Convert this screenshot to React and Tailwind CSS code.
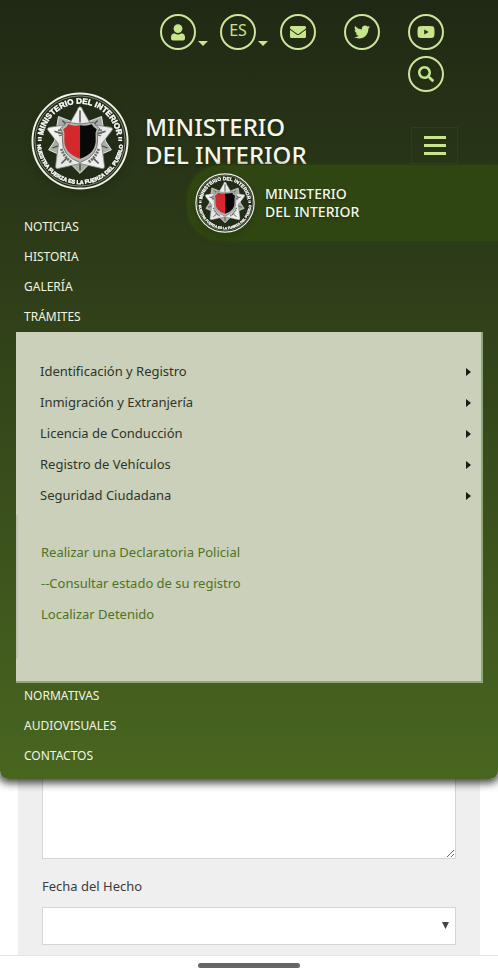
import React, { useId, useState } from 'react';
import { FaEnvelope, FaTwitter, FaYoutube, FaSearch } from 'react-icons/fa';

const mainLinks = ['NOTICIAS', 'HISTORIA', 'GALERÍA'];
const bottomLinks = ['NORMATIVAS', 'AUDIOVISUALES', 'CONTACTOS'];

const services = [
  'Identificación y Registro',
  'Inmigración y Extranjería',
  'Licencia de Conducción',
  'Registro de Vehículos',
  'Seguridad Ciudadana',
];

const procedures = [
  'Realizar una Declaratoria Policial',
  '--Consultar estado de su registro',
  'Localizar Detenido',
];

const circle =
  'flex size-9 items-center justify-center rounded-full border-2 border-[#cbe59a] text-[#c6e58d]';

const Caret = () => (
  <svg viewBox="0 0 10 5" className="mb-1 ml-0.5 h-[5px] w-2.5 fill-[#c6e58d]" aria-hidden="true">
    <path d="M0 0h10L5 5z" />
  </svg>
);

const UserIcon = () => (
  <svg viewBox="0 0 14 17" className="h-[17px] w-3.5 fill-current" aria-hidden="true">
    <circle cx="7" cy="4.600" r="4.400" />
    <path d="M3.500 9.200q3.500 2.400 7 0Q14 10 14 13v1.500q0 2-2 2H2q-2 0-2-2V13q0-3 3.500-3.800z" />
  </svg>
);

const Seal = ({ className }) => {
  const id = useId();
  return (
    <svg viewBox="0 0 100 100" className={className} aria-hidden="true">
      <defs>
        <path id={`${id}top`} d="M12 50a38 38 0 0 1 76 0" />
        <path id={`${id}bottom`} d="M6 50a44 44 0 0 0 88 0" />
        <linearGradient id={`${id}metal`} x1="0" y1="0" x2="1" y2="1">
          <stop offset="0" stopColor="#ffffff" />
          <stop offset="0.5" stopColor="#e4e4e4" />
          <stop offset="1" stopColor="#f5f5f5" />
        </linearGradient>
      </defs>
      <circle cx="50" cy="50" r="48.5" fill="#222d17" stroke="#f1f3e9" strokeWidth="2" />
      <circle cx="50" cy="50" r="46" fill="none" stroke="#dfe4d2" strokeWidth="0.5" />
      <g fill="#fff" stroke="#fff" strokeWidth="0.4" fontFamily="Liberation Sans, sans-serif" fontWeight="bold" textAnchor="middle">
        <text fontSize="8.2">
          <textPath href={`#${id}top`} startOffset="50%">MINISTERIO DEL INTERIOR</textPath>
        </text>
        <text fontSize="5.6">
          <textPath href={`#${id}bottom`} startOffset="50%">NUESTRA FUERZA ES LA FUERZA DEL PUEBLO</textPath>
        </text>
      </g>
      <path d="M7 46h4v1.500H7zM7 48.500h4V50H7zM89 46h4v1.500h-4zM89 48.500h4V50h-4z" fill="#fff" />
      {/* rear star, pointing down */}
      <path
        d="M50 83L40 73l-14 2 1-12-9-4 6-9 4-25 13 5h18l13-5 4 25 6 9-9 4 1 12-14-2z"
        fill="#a9ada5"
        stroke="#e4e7df"
        strokeWidth="1"
      />
      <path d="M32 29l7 7M68 29l-7 7M22 57l9-3M78 57l-9-3M50 80v-8" stroke="#4e534a" strokeWidth="1.500" />
      {/* front star */}
      <path
        d="M50 15q2 0 3 4l8 14 20 3q4 1 1 4L72 53l3 23q0 3-3 2L50 73 28 78q-3 1-3-2l3-23L18 40q-3-3 1-4l20-3 8-14q1-4 3-4z"
        fill={`url(#${id}metal)`}
        stroke="#777b72"
        strokeWidth="0.8"
      />
      <path d="M50 19v12M24 40l9 3M76 40l-9 3M31 73l6-6M69 73l-6-6" stroke="#555a50" strokeWidth="1.600" />
      <path
        d="M29 38l1 7M71 38l-1 7M31 58q3 9 11 14M69 58q-3 9-11 14"
        fill="none"
        stroke="#6a6f66"
        strokeWidth="3"
        strokeDasharray="2 1"
      />
      <path
        d="M36 31q14 3 28 0 3 5 6 6-3 5-2 11 1 17-18 24-19-7-18-24 1-6-2-11 3-1 6-6z"
        fill="#b3b6b1"
        stroke="#60635d"
        strokeWidth="0.8"
      />
      <path d="M50 34q-7 1-12-1-2 4-5 5 2 4 1 9-1 16 16 21z" fill="#d3282c" />
      <path d="M50 34q7 1 12-1 2 4 5 5-2 4-1 9 1 16-16 21z" fill="#090909" />
    </svg>
  );
};

const Brand = ({ small }) => (
  <a href="#inicio" className={`flex items-center ${small ? 'gap-2.5' : 'gap-4'}`}>
    <Seal className={small ? 'size-[60px] drop-shadow-md' : 'size-[98px] drop-shadow-lg'} />
    <span
      className={`text-[#f5f7ec] text-shadow-md font-medium ${
        small ? 'text-sm leading-[18px]' : 'text-2xl leading-7'
      }`}
    >
      <span className="block">MINISTERIO</span>
      <span className="block">DEL INTERIOR</span>
    </span>
  </a>
);

const NavLink = ({ children }) => (
  <li>
    <a href="#seccion" className="block px-6 text-xs leading-[30px] text-[#f0f5e0]">{children}</a>
  </li>
);

const TopBar = () => (
  <div className="flex flex-col items-end gap-1.5 pr-[54px]">
    <div className="flex">
      <button type="button" aria-label="Usuario" className="flex w-[60px] items-end">
        <span className={circle}><UserIcon /></span>
        <Caret />
      </button>
      <button type="button" aria-label="Idioma: ES" className="flex w-[60px] items-end">
        <span className={`${circle} pb-1 text-base`}>ES</span>
        <Caret />
      </button>
      <a href="#correo" aria-label="Correo" className="w-16">
        <span className={circle}><FaEnvelope size={16} /></span>
      </a>
      <a href="#twitter" aria-label="Twitter" className="w-16">
        <span className={circle}><FaTwitter size={16} /></span>
      </a>
      <a href="#youtube" aria-label="YouTube" className={circle}><FaYoutube size={18} /></a>
    </div>
    <button type="button" aria-label="Buscar" className={circle}><FaSearch size={16} /></button>
  </div>
);

const App = () => {
  const [menuOpen, setMenuOpen] = useState(true);
  const [details, setDetails] = useState('');

  return (
    <div className="flex min-h-screen flex-col bg-white font-['Noto_Sans','Open_Sans',sans-serif]">
      <header className="relative z-10 rounded-b-lg bg-linear-to-b from-[#202914] via-[#34461a] to-[#496620] pt-3.5 pb-2 shadow-[0_2px_9px_2px_rgba(0,0,0,0.75)]">
        <TopBar />

        <div className="relative flex items-center justify-between pr-10 pl-[31px]">
          <Brand />
          <button
            type="button"
            aria-label="Menú"
            aria-expanded={menuOpen}
            onClick={() => setMenuOpen(!menuOpen)}
            className="mt-2 flex h-[37px] w-[47px] items-center justify-center border border-[#303c22]"
          >
            <svg viewBox="0 0 22 19" className="h-[19px] w-[22px] fill-[#c6e58d]" aria-hidden="true">
              <path d="M0 0h22v3H0zM0 8h22v3H0zM0 16h22v3H0z" />
            </svg>
          </button>
          <div className="absolute top-[73px] right-0 left-[187px] h-[76px] rounded-l-[34px] bg-[#2f4512] py-2 pl-2 shadow-[0_0_5px_#2f4512]">
            <Brand small />
          </div>
        </div>

        {menuOpen && (
          <nav className="pt-[22px]">
            <ul>
              {mainLinks.map((link) => (
                <NavLink key={link}>{link}</NavLink>
              ))}
              <NavLink>TRÁMITES</NavLink>
            </ul>
            <div className="mr-[15px] ml-4 border-r-2 border-b-2 border-[#91a878] bg-[#cad0b9] pt-6 pb-[22px]">
              <ul>
                {services.map((service) => (
                  <li key={service}>
                    <a href="#servicio" className="flex items-center justify-between pr-2.5 pl-6 text-[13px] leading-[31px] text-[#2f352c]">
                      {service}
                      <svg viewBox="0 0 5 8" className="h-2 w-[5px] fill-[#191d16]" aria-hidden="true">
                        <path d="M0 0l5 4-5 4z" />
                      </svg>
                    </a>
                  </li>
                ))}
              </ul>
              <ul className="mt-1 border-l-2 border-[#bdc0b2] pt-[22px] pb-[29px]">
                {procedures.map((procedure) => (
                  <li key={procedure}>
                    <a href="#tramite" className="block pl-[23px] text-[13px] leading-[31px] text-[#4f731f]">{procedure}</a>
                  </li>
                ))}
              </ul>
            </div>
            <ul className="-mt-0.5">
              {bottomLinks.map((link) => (
                <NavLink key={link}>{link}</NavLink>
              ))}
            </ul>
          </nav>
        )}
      </header>

      <form className="-mt-5 mr-[18px] ml-[18px] bg-[#efefef] px-6 pb-2.5">
        <textarea
          aria-label="Descripción"
          value={details}
          onChange={(e) => setDetails(e.target.value)}
          className="block h-[100px] w-full border border-[#d5d5d5] bg-white p-2 text-[13px]"
        />
        <label htmlFor="fecha" className="mt-3 mb-1.5 block text-[13px] leading-[30px] text-[#3d3d3d]">
          Fecha del Hecho
        </label>
        <div className="relative">
          <select id="fecha" className="block h-[38px] w-full appearance-none border border-[#d5d5d5] bg-white px-3 text-[13px]">
            <option value=""></option>
          </select>
          <svg viewBox="0 0 7 7" className="pointer-events-none absolute top-[15px] right-[7px] size-[7px] fill-[#444]" aria-hidden="true">
            <path d="M0 0h7L3.500 7z" />
          </svg>
        </div>
      </form>

      <footer className="flex flex-1 justify-center border-t border-[#e5e5e5] bg-white pt-[7px]">
        <div className="h-[5px] w-[102px] rounded-full bg-[#666]" />
      </footer>
    </div>
  );
};

export default App;
